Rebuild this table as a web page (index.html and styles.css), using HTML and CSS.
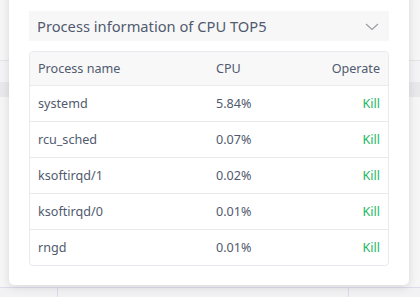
FILE: index.html
```html
<!DOCTYPE html>
<html>
<head>
<meta charset="utf-8">
<link rel="stylesheet" href="styles.css">
</head>
<body>
<div class="page">
  <div class="page-top"></div>
  <div class="page-band"></div>
  <div class="page-rest"></div>
  <div class="page-grid">
    <div class="gcell c1"></div>
    <div class="gcell c2"></div>
    <div class="gcell c3"></div>
  </div>
</div>
<div class="modal">
  <div class="collapse-head">
    <span class="collapse-title">Process information of CPU TOP5</span>
    <svg class="chev" width="14" height="8" viewBox="0 0 14 8"><path d="M1 1 L7 6.5 L13 1" fill="none" stroke="#9a9aa0" stroke-width="1.1"/></svg>
  </div>
  <div class="table">
    <div class="row head">
      <div class="c-name">Process name</div>
      <div class="c-cpu">CPU</div>
      <div class="c-op">Operate</div>
    </div>
    <div class="row">
      <div class="c-name">systemd</div>
      <div class="c-cpu">5.84%</div>
      <div class="c-op kill">Kill</div>
    </div>
    <div class="row">
      <div class="c-name">rcu_sched</div>
      <div class="c-cpu">0.07%</div>
      <div class="c-op kill">Kill</div>
    </div>
    <div class="row">
      <div class="c-name">ksoftirqd/1</div>
      <div class="c-cpu">0.02%</div>
      <div class="c-op kill">Kill</div>
    </div>
    <div class="row">
      <div class="c-name">ksoftirqd/0</div>
      <div class="c-cpu">0.01%</div>
      <div class="c-op kill">Kill</div>
    </div>
    <div class="row last">
      <div class="c-name">rngd</div>
      <div class="c-cpu">0.01%</div>
      <div class="c-op kill">Kill</div>
    </div>
  </div>
</div>
</body>
</html>
```
FILE: styles.css
```css
html, body {
  margin: 0;
  padding: 0;
  width: 420px;
  height: 297px;
  overflow: hidden;
}
body {
  background: #f4f4f6;
  font-family: "Noto Sans", "Open Sans", sans-serif;
  position: relative;
}
.page {
  display: flex;
  flex-direction: column;
  height: 297px;
}
.page-top {
  height: 60px;
  border-bottom: 1px solid #e4e4ea;
  background: #f6f6f7;
}
.page-band {
  margin-top: 21px;
  height: 15px;
  background: #e9e9ec;
}
.page-rest {
  flex: 1;
  background: #f6f6f7;
}
.page-grid {
  height: 9px;
  display: flex;
  border-top: 1px solid #dcdbec;
  background: #f2f2f4;
}
.gcell { height: 100%; }
.c1 { width: 57px; border-right: 1px solid #dcdbec; }
.c2 { width: 290px; border-right: 1px solid #dcdbec; }
.c3 { flex: 1; }

.modal {
  position: absolute;
  left: 9px;
  top: -10px;
  width: 400px;
  height: 295px;
  box-sizing: border-box;
  padding: 21px 20px 0 20px;
  background: #fff;
  border-radius: 5px;
  box-shadow: 0 2px 10px rgba(0, 0, 0, 0.13);
  display: flex;
  flex-direction: column;
  gap: 10px;
}
.collapse-head {
  height: 30px;
  background: #f7f7f8;
  display: flex;
  align-items: center;
  justify-content: space-between;
  padding: 0 10px 0 8px;
}
.collapse-title {
  font-size: 14.7px;
  color: #515a6e;
}
.chev { margin-top: 1px; }
.table {
  border: 1px solid #e8eaf0;
  border-radius: 4px;
  overflow: hidden;
  font-size: 12.6px;
  color: #515a6e;
}
.row {
  display: flex;
  align-items: center;
  height: 35px;
  border-bottom: 1px solid #e8eaec;
  padding: 0 8px;
}
.row.head {
  height: 33px;
  background: #f8f8f9;
}
.row.last { border-bottom: none; }
.c-name { width: 178px; }
.c-cpu { flex: 1; }
.c-op { text-align: right; }
.kill { color: #22b85f; }
```
